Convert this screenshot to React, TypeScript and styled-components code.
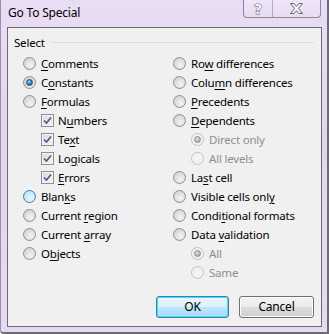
import React from 'react';
import styled, { createGlobalStyle, css } from 'styled-components';

const GlobalStyle = createGlobalStyle`
  html, body {
    margin: 0;
    padding: 0;
    background: #ffffff;
  }
  body {
    font-family: 'Noto Sans', 'Open Sans', 'DejaVu Sans', sans-serif;
    font-size: 11.5px;
    letter-spacing: -0.2px;
  }
`;

const Window = styled.div`
  box-sizing: border-box;
  width: 329px;
  height: 334px;
  display: flex;
  flex-direction: column;
  background: linear-gradient(180deg, #e9ddf4 0%, #e3d5f0 40%, #e6d9f2 100%);
  border-right: 2px solid #6f6a76;
  border-bottom: 2px solid #6f6a76;
  border-left: 1px solid #9a90a6;
  border-bottom-left-radius: 4px;
`;

const TitleBar = styled.div`
  height: 27px;
  display: flex;
  align-items: flex-start;
  justify-content: space-between;
  padding-left: 7px;
  padding-right: 6px;
`;

const Title = styled.div`
  margin-top: 4px;
  font-size: 12px;
  color: #000;
  line-height: 18px;
`;

const CaptionGroup = styled.div`
  display: flex;
  height: 17px;
  border: 1px solid #8f8799;
  border-top: none;
  border-radius: 0 0 4px 4px;
  background: linear-gradient(180deg, #efe6f7 0%, #e6dbf1 100%);
  overflow: hidden;
`;

const CaptionButton = styled.div<{ $wide?: boolean }>`
  width: ${(p) => (p.$wide ? 47 : 28)}px;
  display: flex;
  align-items: center;
  justify-content: center;
  & + & {
    border-left: 1px solid #b5abc0;
  }
`;

const Client = styled.div`
  box-sizing: border-box;
  margin: 0 5px 5px 6px;
  flex: 1;
  display: flex;
  flex-direction: column;
  background: #f0f0f0;
  border: 1px solid #6c6c6c;
  padding: 6px 7px 8px 0;
`;

const GroupHeader = styled.div`
  display: flex;
  align-items: center;
  height: 16px;
  gap: 6px;
  padding-left: 6px;
  color: #000;
`;

const GroupRule = styled.div`
  flex: 1;
  height: 1px;
  background: #d5dfe5;
`;

const Columns = styled.div`
  display: grid;
  grid-template-columns: 150px 1fr;
  padding-left: 15px;
  margin-top: 4px;
`;

const Column = styled.div`
  display: flex;
  flex-direction: column;
`;

const Row = styled.div<{ $indent?: boolean; $disabled?: boolean; $check?: boolean }>`
  height: 19px;
  display: flex;
  align-items: center;
  gap: ${(p) => (p.$check ? 4 : 5)}px;
  padding-left: ${(p) => (p.$indent ? 18 : 0)}px;
  color: ${(p) => (p.$disabled ? '#8f8f8f' : '#000')};
  white-space: nowrap;
`;

const Label = styled.span`
  line-height: 15px;
`;

const Key = styled.span`
  text-decoration: underline;
  text-underline-offset: 2px;
`;

type RadioState = 'normal' | 'checked' | 'hover' | 'disabled' | 'disabledChecked';

const Radio = styled.span<{ $state: RadioState }>`
  box-sizing: border-box;
  width: 13px;
  height: 13px;
  flex: none;
  border-radius: 50%;
  position: relative;
  border: 1px solid #8e8f8f;
  background: radial-gradient(circle at 60% 65%, #f4f4f4 0%, #dcdcdc 55%, #cfcfcf 100%);
  ${(p) =>
    p.$state === 'hover' &&
    css`
      border-color: #3c7fb1;
      background: radial-gradient(circle at 60% 65%, #e9f7fe 0%, #c6e8fa 60%, #a9d8f5 100%);
    `}
  ${(p) =>
    (p.$state === 'disabled' || p.$state === 'disabledChecked') &&
    css`
      border-color: #c2c2c2;
      background: #f2f2f2;
    `}
  &::after {
    content: '';
    display: ${(p) => (p.$state === 'checked' || p.$state === 'disabledChecked' ? 'block' : 'none')};
    position: absolute;
    left: 2px;
    top: 2px;
    width: 7px;
    height: 7px;
    box-sizing: border-box;
    border-radius: 50%;
    ${(p) =>
      p.$state === 'checked'
        ? css`
            border: 1px solid #1d4f7a;
            background: radial-gradient(circle at 40% 35%, #a6e0ff 0%, #2c8ccf 45%, #104a7e 100%);
          `
        : css`
            border: 1px solid #8d8d8d;
            background: radial-gradient(circle at 40% 35%, #e2e2e2 0%, #b4b4b4 60%, #9a9a9a 100%);
          `}
  }
`;

const CheckBox = styled.span`
  box-sizing: border-box;
  width: 13px;
  height: 13px;
  flex: none;
  border: 1px solid #8e8f8f;
  background: linear-gradient(135deg, #d9d9d9 0%, #f6f6f6 100%);
  box-shadow: inset 0 0 0 1px #f4f4f4;
  display: flex;
  align-items: center;
  justify-content: center;
`;

const Buttons = styled.div`
  margin-top: auto;
  display: flex;
  justify-content: flex-end;
  gap: 10px;
`;

const Button = styled.button<{ $default?: boolean; $width: number }>`
  box-sizing: border-box;
  width: ${(p) => p.$width}px;
  height: 22px;
  font-family: inherit;
  font-size: 12px;
  letter-spacing: -0.2px;
  color: #000;
  border-radius: 3px;
  border: 1px solid ${(p) => (p.$default ? '#3c7fb1' : '#707070')};
  background: ${(p) =>
    p.$default
      ? 'linear-gradient(180deg, #eaf6fd 0%, #d9f0fc 50%, #bee6fd 51%, #a7d9f5 100%)'
      : 'linear-gradient(180deg, #f2f2f2 0%, #ebebeb 50%, #dddddd 51%, #cfcfcf 100%)'};
  box-shadow: inset 0 0 0 1px ${(p) => (p.$default ? '#48d8fb' : '#fcfcfc')};
  padding: 0;
  line-height: 18px;
`;

const Tick = () => (
  <svg width="9" height="9" viewBox="0 0 9 9">
    <path d="M1 4.5 L3.5 7 L8 1.5" fill="none" stroke="#4a5c94" strokeWidth="1.7" />
  </svg>
);

const HelpGlyph = () => (
  <svg width="14" height="15" viewBox="0 0 14 15">
    <text
      x="7"
      y="13"
      textAnchor="middle"
      fontFamily="'DejaVu Sans', sans-serif"
      fontWeight="bold"
      fontSize="14"
      fill="#f6f1fa"
      stroke="#6b6475"
      strokeWidth="1"
      paintOrder="stroke"
    >
      ?
    </text>
  </svg>
);

const CloseGlyph = () => (
  <svg width="15" height="11" viewBox="0 0 15 11">
    <path
      d="M1.5 0.5 H5 L7.5 3.3 L10 0.5 H13.5 L9.5 5.5 L13.5 10.5 H10 L7.5 7.7 L5 10.5 H1.5 L5.5 5.5 Z"
      fill="#f4eff8"
      stroke="#6b6475"
      strokeWidth="1"
      strokeLinejoin="round"
    />
  </svg>
);

type Item = {
  pre: string;
  key: string;
  post: string;
  kind: 'radio' | 'check';
  state?: RadioState;
  indent?: boolean;
  disabled?: boolean;
};

const leftItems: Item[] = [
  { pre: '', key: 'C', post: 'omments', kind: 'radio', state: 'normal' },
  { pre: 'C', key: 'o', post: 'nstants', kind: 'radio', state: 'checked' },
  { pre: '', key: 'F', post: 'ormulas', kind: 'radio', state: 'normal' },
  { pre: 'N', key: 'u', post: 'mbers', kind: 'check', indent: true },
  { pre: 'Te', key: 'x', post: 't', kind: 'check', indent: true },
  { pre: 'Lo', key: 'g', post: 'icals', kind: 'check', indent: true },
  { pre: '', key: 'E', post: 'rrors', kind: 'check', indent: true },
  { pre: 'Blan', key: 'k', post: 's', kind: 'radio', state: 'hover' },
  { pre: 'Current ', key: 'r', post: 'egion', kind: 'radio', state: 'normal' },
  { pre: 'Current ', key: 'a', post: 'rray', kind: 'radio', state: 'normal' },
  { pre: 'O', key: 'b', post: 'jects', kind: 'radio', state: 'normal' },
];

const rightItems: Item[] = [
  { pre: 'Ro', key: 'w', post: ' differences', kind: 'radio', state: 'normal' },
  { pre: 'Colu', key: 'm', post: 'n differences', kind: 'radio', state: 'normal' },
  { pre: '', key: 'P', post: 'recedents', kind: 'radio', state: 'normal' },
  { pre: '', key: 'D', post: 'ependents', kind: 'radio', state: 'normal' },
  { pre: 'Direct only', key: '', post: '', kind: 'radio', state: 'disabledChecked', indent: true, disabled: true },
  { pre: 'All levels', key: '', post: '', kind: 'radio', state: 'disabled', indent: true, disabled: true },
  { pre: 'La', key: 's', post: 't cell', kind: 'radio', state: 'normal' },
  { pre: 'Visible cells onl', key: 'y', post: '', kind: 'radio', state: 'normal' },
  { pre: 'Condi', key: 't', post: 'ional formats', kind: 'radio', state: 'normal' },
  { pre: 'Data ', key: 'v', post: 'alidation', kind: 'radio', state: 'normal' },
  { pre: 'All', key: '', post: '', kind: 'radio', state: 'disabledChecked', indent: true, disabled: true },
  { pre: 'Same', key: '', post: '', kind: 'radio', state: 'disabled', indent: true, disabled: true },
];

const OptionRow = ({ item }: { item: Item }) => (
  <Row $indent={item.indent} $disabled={item.disabled} $check={item.kind === 'check'}>
    {item.kind === 'radio' ? (
      <Radio $state={item.state ?? 'normal'} />
    ) : (
      <CheckBox>
        <Tick />
      </CheckBox>
    )}
    <Label>
      {item.pre}
      {item.key && <Key>{item.key}</Key>}
      {item.post}
    </Label>
  </Row>
);

const App = (): JSX.Element => (
  <>
    <GlobalStyle />
    <Window>
      <TitleBar>
        <Title>Go To Special</Title>
        <CaptionGroup>
          <CaptionButton>
            <HelpGlyph />
          </CaptionButton>
          <CaptionButton $wide>
            <CloseGlyph />
          </CaptionButton>
        </CaptionGroup>
      </TitleBar>
      <Client>
        <GroupHeader>
          <span>Select</span>
          <GroupRule />
        </GroupHeader>
        <Columns>
          <Column>
            {leftItems.map((it) => (
              <OptionRow key={it.pre + it.key + it.post} item={it} />
            ))}
          </Column>
          <Column>
            {rightItems.map((it) => (
              <OptionRow key={it.pre + it.key + it.post} item={it} />
            ))}
          </Column>
        </Columns>
        <Buttons>
          <Button $default $width={73}>
            OK
          </Button>
          <Button $width={75}>Cancel</Button>
        </Buttons>
      </Client>
    </Window>
  </>
);

export default App;
